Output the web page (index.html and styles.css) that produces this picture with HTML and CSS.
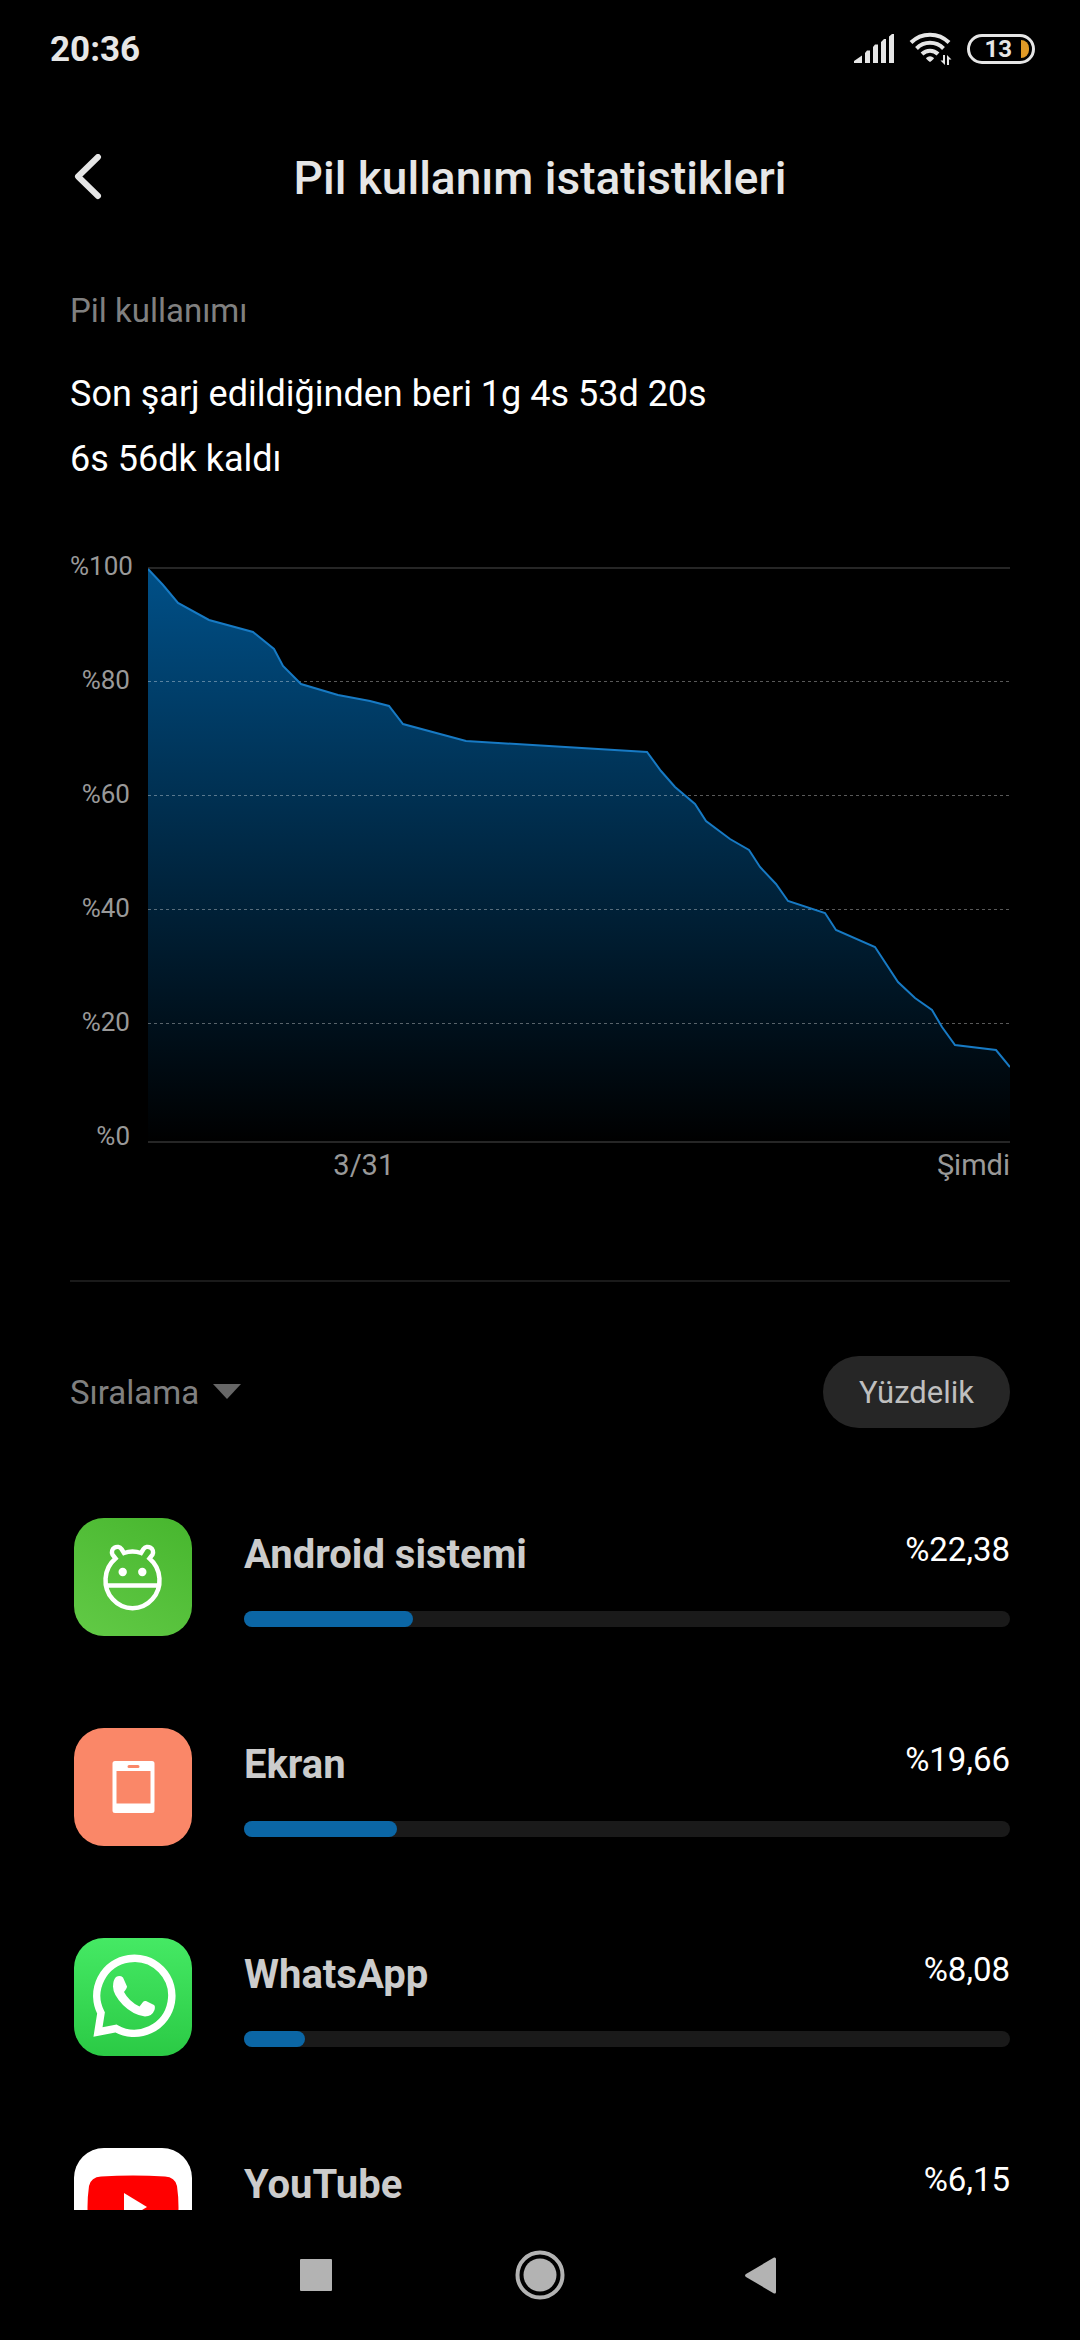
FILE: index.html
```html
<!DOCTYPE html>
<html lang="tr">
<head>
    <meta charset="UTF-8">
    <meta name="viewport" content="width=device-width, initial-scale=1">
    <title>Pil kullanım istatistikleri</title>
    <link rel="stylesheet" href="styles.css">
</head>
<body>
    <div class="status">
        <span class="time">20:36</span>
        <div class="status-icons">
            <svg class="signal" width="40" height="30" viewBox="0 0 40 30">
                <path d="M0 29V27L8 21.500V29ZM11 29V19L13 16.500H16V29ZM19 29V13L21 10.500H24V29ZM27 29V8L30 5H32V29ZM35 29V2.500L38 0H40V29Z"/>
            </svg>
            <svg class="wifi" width="43" height="34" viewBox="0 0 43 34">
                <path class="arc" d="M2 10.500A27 27 0 0 1 40 10.500M7.500 16.500A19 19 0 0 1 34.500 16.500M13 22A11.500 11.500 0 0 1 29 22"/>
                <path d="M17 26Q21 22.500 25 26Q25 27 21 30Q17 27 17 26ZM34 23H36V33L31.500 28.500H34ZM38 33V23L42.500 27.500H40V33Z"/>
            </svg>
            <div class="battery">13<span class="level"></span></div>
        </div>
    </div>

    <header class="header">
        <button class="back" type="button" aria-label="Geri">
            <svg width="28" height="48" viewBox="0 0 28 48"><path d="M24 3L4 22.500L24 42"/></svg>
        </button>
        <h1 class="title">Pil kullanım istatistikleri</h1>
    </header>

    <main class="content">
        <h2 class="caption">Pil kullanımı</h2>
        <p class="summary">Son şarj edildiğinden beri 1g 4s 53d 20s</p>
        <p class="summary">6s 56dk kaldı</p>

        <div class="chart">
            <div class="y-axis">
                <span>%100</span>
                <span>%80</span>
                <span>%60</span>
                <span>%40</span>
                <span>%20</span>
                <span>%0</span>
            </div>
            <div class="plot">
                <svg class="graph" viewBox="0 0 862 576" preserveAspectRatio="none">
                    <defs>
                        <linearGradient id="fill" gradientUnits="userSpaceOnUse" x1="0" y1="0" x2="0" y2="576">
                            <stop offset="0" stop-color="#005088"/>
                            <stop offset="1" stop-color="#000"/>
                        </linearGradient>
                    </defs>
                    <path class="axis" d="M0 1H862M0 575H862"/>
                    <path class="area" d="M0 2L15 18L30 36L61 53L105 65L126 82L135 99L153 117L190 128L222 134L241 139L255 157L318 174L499 185L513 204L527 220L547 237L558 254L582 272L601 283L612 300L628 317L640 334L677 346L688 363L727 380L750 415L767 431L784 443L794 460L807 478L848 483L862 500V574H0Z"/>
                    <path class="grid" d="M0 114.500H862M0 228.500H862M0 342.500H862M0 456.500H862"/>
                    <path class="line" d="M0 2L15 18L30 36L61 53L105 65L126 82L135 99L153 117L190 128L222 134L241 139L255 157L318 174L499 185L513 204L527 220L547 237L558 254L582 272L601 283L612 300L628 317L640 334L677 346L688 363L727 380L750 415L767 431L784 443L794 460L807 478L848 483L862 500"/>
                </svg>
                <div class="x-axis">
                    <span>3/31</span>
                    <span>Şimdi</span>
                </div>
            </div>
        </div>

        <hr class="divider">

        <div class="controls">
            <label class="sort">
                <select class="sort-select" aria-label="Sıralama">
                    <option>Sıralama</option>
                </select>
                <svg width="28" height="16" viewBox="0 0 28 16"><path d="M0 0H28L14 15Z"/></svg>
            </label>
            <button class="pill" type="button">Yüzdelik</button>
        </div>

        <ul class="apps">
            <li class="app">
                <svg class="icon android" viewBox="0 0 118 118">
                    <path class="draw" d="M50 35Q58.500 32 67 35L69.500 31A5.300 5.300 0 0 1 78.500 36.500L75.500 40.500A27 28 0 1 1 41.500 40.500L38.500 36.500A5.300 5.300 0 0 1 47.500 31ZM32 67.500H85"/>
                    <circle cx="48.700" cy="54" r="4.200"/>
                    <circle cx="68.300" cy="54" r="4.200"/>
                </svg>
                <div class="info">
                    <div class="row"><span class="name">Android sistemi</span><span class="percent">%22,38</span></div>
                    <div class="bar"><div class="used" style="width: 22%"></div></div>
                </div>
            </li>
            <li class="app">
                <svg class="icon screen" viewBox="0 0 118 118">
                    <path fill-rule="evenodd" d="M41 33H78Q80.500 33 80.500 35.500V82.500Q80.500 85 78 85H41Q38.500 85 38.500 82.500V35.500Q38.500 33 41 33ZM42.500 43V75.500H76.500V43ZM55 37Q53.500 37 53.500 38.500Q53.500 40 55 40H64Q65.500 40 65.500 38.500Q65.500 37 64 37Z"/>
                </svg>
                <div class="info">
                    <div class="row"><span class="name">Ekran</span><span class="percent">%19,66</span></div>
                    <div class="bar"><div class="used" style="width: 20%"></div></div>
                </div>
            </li>
            <li class="app">
                <svg class="icon whatsapp" viewBox="0 0 118 118">
                    <path class="draw" d="M27 75L24 94L42 90.500A37.500 37.500 0 1 0 27 75Z"/>
                    <path d="M42 39Q46 37 49 39.500L53 48.500Q53 50 50 54Q55 63.500 65.500 68.500L69 64Q70 62.500 72 63L80 67Q81.500 68 80.500 72Q78 78.500 71 78.500Q59 77 49 67Q39 56.500 39 48.500Q39 42 42 39Z"/>
                </svg>
                <div class="info">
                    <div class="row"><span class="name">WhatsApp</span><span class="percent">%8,08</span></div>
                    <div class="bar"><div class="used" style="width: 8%"></div></div>
                </div>
            </li>
            <li class="app">
                <svg class="icon youtube" viewBox="0 0 118 118">
                    <path class="red" d="M27 28.500Q59 26.500 91 28.500Q101 29 103 38Q106 59 103 80Q101 89 91 90Q59 92 27 90Q17 89 15 80Q12 59 15 38Q17 29 27 28.500Z"/>
                    <path d="M50 45V73L73 59Z"/>
                </svg>
                <div class="info">
                    <div class="row"><span class="name">YouTube</span><span class="percent">%6,15</span></div>
                    <div class="bar"><div class="used" style="width: 6%"></div></div>
                </div>
            </li>
        </ul>
    </main>

    <nav class="nav">
        <button class="nav-button" type="button" aria-label="Son uygulamalar">
            <svg width="50" height="50" viewBox="0 0 50 50"><rect x="9" y="9" width="32" height="32" rx="1"/></svg>
        </button>
        <button class="nav-button" type="button" aria-label="Ana ekran">
            <svg width="50" height="50" viewBox="0 0 50 50"><circle cx="25" cy="25" r="16.500"/><circle class="ring" cx="25" cy="25" r="22.500"/></svg>
        </button>
        <button class="nav-button" type="button" aria-label="Geri">
            <svg width="50" height="50" viewBox="0 0 50 50"><path d="M7 24Q5 25.500 7 27L35 43.500Q37 44 37 42V9Q37 7 35 7.500Z"/></svg>
        </button>
    </nav>
</body>
</html>
```
FILE: styles.css
```css
* {
    box-sizing: border-box;
}
body {
    margin: 0;
    height: 100vh;
    display: flex;
    flex-direction: column;
    overflow: hidden;
    background: #000;
    color: #fff;
    font-family: Roboto, "Noto Sans", sans-serif;
}
button, select {
    border: 0;
    padding: 0;
    background: none;
    font: inherit;
    color: inherit;
}
svg {
    display: block;
}

/* status bar */
.status {
    display: flex;
    justify-content: space-between;
    align-items: center;
    height: 98px;
    padding: 0 45px 0 50px;
    color: #e6e6e6;
    flex-shrink: 0;
}
.time {
    font-size: 35px;
    font-weight: 700;
}
.status-icons {
    display: flex;
    align-items: center;
    gap: 15px;
}
.signal, .wifi {
    fill: #e6e6e6;
}
.wifi .arc {
    fill: none;
    stroke: #e6e6e6;
    stroke-width: 4;
}
.battery {
    display: flex;
    align-items: center;
    justify-content: flex-end;
    gap: 9px;
    width: 68px;
    height: 30px;
    padding-right: 3px;
    border: 3px solid #e6e6e6;
    border-radius: 15px;
    font-size: 24px;
    font-weight: 700;
}
.level {
    width: 8px;
    height: 18px;
    border-radius: 0 8px 8px 0;
    background: #e09a26;
}

.header {
    display: grid;
    grid-template-columns: 96px 1fr 96px;
    align-items: center;
    height: 160px;
    padding: 0 50px;
    flex-shrink: 0;
}
.back {
    padding: 0 24px;
}
.back path {
    fill: none;
    stroke: #e6e6e6;
    stroke-width: 6;
    stroke-linecap: round;
    stroke-linejoin: round;
}
.title {
    margin: 0;
    color: #e6e6e6;
    font-size: 46px;
    font-weight: 500;
    text-align: center;
}

.content {
    flex: 1;
    min-height: 0;
    overflow: hidden;
    padding: 33px 70px 0;
}
.caption {
    margin: 0 0 31px;
    color: #808080;
    font-size: 33px;
    font-weight: 400;
    line-height: 40px;
}
.summary {
    margin: 0;
    font-size: 36px;
    line-height: 65px;
}

/* battery level chart */
.chart {
    display: flex;
    gap: 18px;
    margin-top: 57px;
    color: #999;
    font-size: 29px;
    line-height: 34px;
}
.y-axis {
    display: flex;
    flex-direction: column;
    justify-content: space-between;
    width: 60px;
    height: 604px;
    font-size: 26px;
    text-align: right;
}
.plot {
    flex: 1;
    padding-top: 18px;
}
.graph {
    width: 100%;
    height: 576px;
}
.graph path {
    fill: none;
    vector-effect: non-scaling-stroke;
}
.graph .area {
    fill: url(#fill);
}
.graph .axis {
    stroke: #262626;
    stroke-width: 2;
}
.graph .grid {
    stroke: rgba(255, 255, 255, .35);
    stroke-dasharray: 3 3;
}
.graph .line {
    stroke: #177ac4;
    stroke-width: 2;
}
.x-axis {
    display: flex;
    justify-content: space-between;
    margin-top: 5px;
    padding-left: 21.5%;
}

.divider {
    height: 2px;
    margin: 98px 0 74px;
    border: 0;
    background: #1a1a1a;
}

.controls {
    display: flex;
    justify-content: space-between;
    align-items: center;
}
.sort {
    display: flex;
    align-items: center;
    gap: 13px;
    color: #808080;
    font-size: 33px;
}
.sort-select {
    appearance: none;
}
.sort svg {
    fill: #666;
}
.pill {
    height: 72px;
    padding: 0 36px;
    border-radius: 36px;
    background: #262626;
    color: #bfbfbf;
    font-size: 31px;
}

/* app list */
.apps {
    margin: 44px 0 0;
    padding: 0;
    list-style: none;
}
.app {
    display: flex;
    gap: 52px;
    height: 210px;
    padding: 46px 0 0 4px;
}
.icon {
    width: 118px;
    height: 118px;
    border-radius: 30px;
    fill: #fff;
    flex-shrink: 0;
}
.icon .draw {
    fill: none;
    stroke: #fff;
    stroke-width: 4.500;
}
.android {
    background: linear-gradient(30deg, #62ca46, #47b62e);
}
.screen {
    background: #fa8768;
}
.whatsapp {
    background: linear-gradient(#45e964, #2bca45);
}
.whatsapp .draw {
    stroke-width: 7.500;
}
.youtube {
    background: #fff;
}
.youtube .red {
    fill: #f00;
}
.info {
    flex: 1;
    padding-top: 13px;
}
.row {
    display: flex;
    justify-content: space-between;
}
.name {
    color: #ccc;
    font-size: 40px;
    font-weight: 700;
    line-height: 48px;
}
.percent {
    font-size: 33px;
    line-height: 38px;
}
.bar {
    height: 16px;
    margin-top: 32px;
    border-radius: 8px;
    background: #1a1a1a;
}
.used {
    height: 16px;
    border-radius: 8px;
    background: #0b66a5;
}

/* navigation bar */
.nav {
    display: flex;
    justify-content: center;
    height: 130px;
    flex-shrink: 0;
}
.nav-button {
    display: flex;
    justify-content: center;
    align-items: center;
    width: 224px;
}
.nav-button svg {
    fill: #b3b3b3;
}
.nav-button .ring {
    fill: none;
    stroke: #b3b3b3;
    stroke-width: 4;
}
```
